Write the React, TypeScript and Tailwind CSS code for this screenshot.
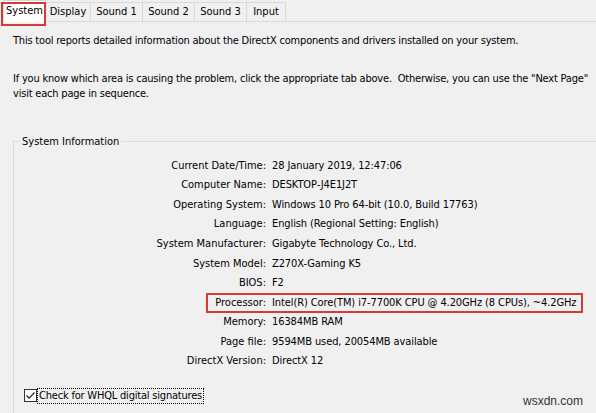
const tabs = [
  { label: "System", w: "w-[43px]" },
  { label: "Display", w: "w-[45px]" },
  { label: "Sound 1", w: "w-[52px]" },
  { label: "Sound 2", w: "w-[52px]" },
  { label: "Sound 3", w: "w-[52px]" },
  { label: "Input", w: "w-[39px]" },
];

const rows = [
  { label: "Current Date/Time:", value: "28 January 2019, 12:47:06" },
  { label: "Computer Name:", value: "DESKTOP-J4E1J2T" },
  { label: "Operating System:", value: "Windows 10 Pro 64-bit (10.0, Build 17763)" },
  { label: "Language:", value: "English (Regional Setting: English)" },
  { label: "System Manufacturer:", value: "Gigabyte Technology Co., Ltd." },
  { label: "System Model:", value: "Z270X-Gaming K5" },
  { label: "BIOS:", value: "F2" },
  { label: "Processor:", value: "Intel(R) Core(TM) i7-7700K CPU @ 4.20GHz (8 CPUs), ~4.2GHz", marked: true },
  { label: "Memory:", value: "16384MB RAM" },
  { label: "Page file:", value: "9594MB used, 20054MB available" },
  { label: "DirectX Version:", value: "DirectX 12" },
];

export default function App() {
  return (
    <div className="relative w-[596px] h-[413px] overflow-hidden bg-[#f0f0f0] text-[11px] text-black font-['DejaVu_Sans_Condensed','Liberation_Sans',sans-serif]">
      {/* tab strip */}
      <div className="relative flex items-end h-[22px] pl-[3px] border-b border-[#d9d9d9]">
        {tabs.map((t, i) =>
          i === 0 ? (
            <div
              key={t.label}
              className={`${t.w} h-[22px] -mb-px flex items-center justify-center bg-white border border-b-0 border-[#d9d9d9]`}
            >
              {t.label}
            </div>
          ) : (
            <div
              key={t.label}
              className={`${t.w} h-[19px] flex items-center justify-center border-t border-r border-[#d9d9d9]`}
            >
              {t.label}
            </div>
          )
        )}
        {/* red highlight around the selected tab */}
        <div className="absolute left-[1px] top-[2px] w-[45px] h-[24px] border-2 border-[#d63a36]" />
      </div>

      <div className="pl-[13px]">
        <p className="mt-[11px] leading-[15px] tracking-[-0.2px]">
          This tool reports detailed information about the DirectX components and drivers installed on your system.
        </p>
        <p className="mt-[23px] leading-[15px] tracking-[-0.2px] whitespace-nowrap">
          If you know which area is causing the problem, click the appropriate tab above.&nbsp; Otherwise, you can use the "Next Page"
          <br />
          visit each page in sequence.
        </p>

        {/* group box */}
        <div className="relative mt-[40px] w-[600px] h-[300px] border-t border-l border-[#dcdcdc]">
          <span className="absolute -top-[8px] left-[6px] px-[2px] leading-[15px] bg-[#f0f0f0]">System Information</span>

          <div className="pt-[14px]">
            {rows.map(r => (
              <div key={r.label} className="relative flex items-center h-[19.6px]">
                <span className="w-[252px] text-right whitespace-nowrap">{r.label}</span>
                <span className="ml-[6px] whitespace-nowrap tracking-[-0.1px]">{r.value}</span>
                {r.marked && (
                  <div className="absolute left-[192px] top-0 w-[377px] h-[20px] border-2 border-[#d63a36]" />
                )}
              </div>
            ))}
          </div>

          <div className="mt-[17px] ml-[10px] flex items-center">
            <span className="w-[13px] h-[13px] border border-[#333] bg-white flex items-center justify-center">
              <svg viewBox="0 0 11 11" className="w-[11px] h-[11px]">
                <path d="M1.5 5.5 L4.2 8.2 L9.5 2.5" fill="none" stroke="#222" strokeWidth="1.2" />
              </svg>
            </span>
            <span className="ml-px px-px leading-[14px] tracking-[-0.2px] outline-1 outline-dotted outline-black">
              Check for WHQL digital signatures
            </span>
          </div>

          <span className="absolute left-[509px] top-[250px] text-[12px] text-[#333] font-['Liberation_Sans',sans-serif]">
            wsxdn.com
          </span>
        </div>
      </div>
    </div>
  );
}
